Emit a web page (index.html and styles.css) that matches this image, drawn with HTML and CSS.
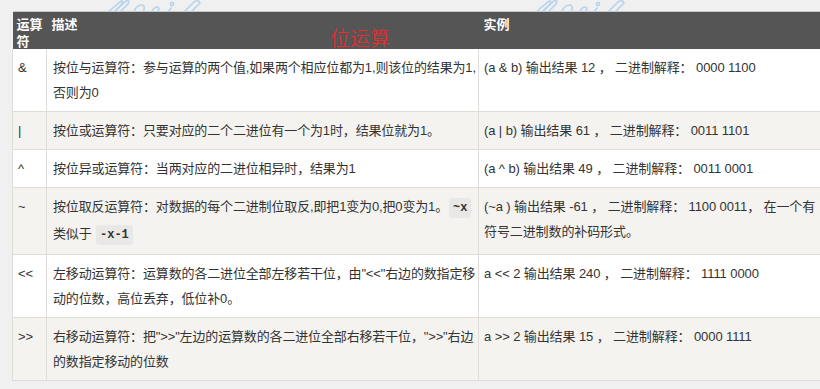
FILE: index.html
```html
<!DOCTYPE html>
<html lang="zh">
<head>
<meta charset="utf-8">
<title>位运算</title>
<link rel="stylesheet" href="styles.css">
</head>
<body>
<div class="page">
  <svg class="clip clip-a" width="110" height="12" viewBox="0 0 110 12">
    <g fill="none" stroke="#b9d3ec" stroke-width="1.6" stroke-linecap="round">
      <path d="M8 12 L20 2 Q24 -1 22 4 L14 12"/>
      <path d="M14 12 L26 1 Q30 -1 28 4 L20 12"/>
      <path d="M34 12 Q36 5 42 5 Q46 6 43 12"/>
      <path d="M52 11 Q54 7 58 7 Q60 9 57 12"/>
      <circle cx="72" cy="4" r="1.6"/>
      <path d="M68 12 L71 8"/>
      <path d="M84 12 L94 2 Q98 -1 100 3 L92 11"/>
    </g>
  </svg>
  <svg class="clip clip-b" width="110" height="12" viewBox="0 0 110 12">
    <g fill="none" stroke="#b9d3ec" stroke-width="1.6" stroke-linecap="round">
      <path d="M8 12 L20 2 Q24 -1 22 4 L14 12"/>
      <path d="M14 12 L26 1 Q30 -1 28 4 L20 12"/>
      <path d="M34 12 Q36 5 42 5 Q46 6 43 12"/>
      <path d="M52 11 Q54 7 58 7 Q60 9 57 12"/>
      <circle cx="70" cy="4" r="1.6"/>
      <path d="M66 12 L69 8"/>
      <path d="M80 12 L90 2 Q94 -1 96 3 L88 11"/>
    </g>
  </svg>
  <table class="ops">
    <colgroup>
      <col class="c1">
      <col class="c2">
      <col class="c3">
    </colgroup>
    <thead>
      <tr>
        <th>运算符</th>
        <th>描述</th>
        <th>实例</th>
      </tr>
    </thead>
    <tbody>
      <tr>
        <td>&amp;</td>
        <td>按位与运算符：参与运算的两个值,如果两个相应位都为1,则该位的结果为1,否则为0</td>
        <td>(a &amp; b) 输出结果 12 ， 二进制解释： 0000 1100</td>
      </tr>
      <tr class="alt">
        <td>|</td>
        <td>按位或运算符：只要对应的二个二进位有一个为1时，结果位就为1。</td>
        <td>(a | b) 输出结果 61 ， 二进制解释： 0011 1101</td>
      </tr>
      <tr>
        <td>^</td>
        <td>按位异或运算符：当两对应的二进位相异时，结果为1</td>
        <td>(a ^ b) 输出结果 49 ， 二进制解释： 0011 0001</td>
      </tr>
      <tr class="alt">
        <td>~</td>
        <td>按位取反运算符：对数据的每个二进制位取反,即把1变为0,把0变为1。<code>~x</code> 类似于 <code>-x-1</code></td>
        <td>(~a ) 输出结果 -61 ， 二进制解释： 1100 0011， 在一个有符号二进制数的补码形式。</td>
      </tr>
      <tr>
        <td>&lt;&lt;</td>
        <td>左移动运算符：运算数的各二进位全部左移若干位，由"&lt;&lt;"右边的数指定移动的位数，高位丢弃，低位补0。</td>
        <td>a &lt;&lt; 2 输出结果 240 ， 二进制解释： 1111 0000</td>
      </tr>
      <tr class="alt">
        <td>&gt;&gt;</td>
        <td>右移动运算符：把"&gt;&gt;"左边的运算数的各二进位全部右移若干位，"&gt;&gt;"右边的数指定移动的位数</td>
        <td>a &gt;&gt; 2 输出结果 15 ， 二进制解释： 0000 1111</td>
      </tr>
    </tbody>
  </table>
  <div class="title">位运算</div>
</div>
</body>
</html>
```

FILE: styles.css
```css
html, body {
  margin: 0;
  padding: 0;
  background: #f0f0f0;
}

body {
  font-family: "Liberation Sans", "Noto Sans CJK SC", sans-serif;
  color: #333;
  overflow: hidden;
}

.page {
  position: relative;
  padding: 11px 0 0 12px;
  width: 820px;
  height: 389px;
  box-sizing: border-box;
}

.clip {
  position: absolute;
  top: 0;
}

.clip-a { left: 100px; }
.clip-b { left: 528px; }

.ops {
  border-collapse: collapse;
  table-layout: fixed;
  width: 820px;
  font-size: 13px;
}

.c1 { width: 34px; }
.c2 { width: 432px; }
.c3 { width: 354px; }

.ops th {
  background: #555;
  color: #fff;
  font-weight: bold;
  text-align: left;
  vertical-align: top;
  line-height: 17px;
  height: 34px;
  padding: 3px 2px 0 5px;
  border-top: 1px solid #c8c8c8;
  font-family: "Noto Sans CJK SC", sans-serif;
  box-sizing: content-box;
}

.ops th:first-child {
  padding-left: 4px;
  padding-right: 0;
}

.ops td {
  background: #fff;
  vertical-align: top;
  line-height: 25px;
  padding: 6px 5px 6px 5px;
  border-bottom: 1px solid #e0ddd8;
  border-left: 1px solid #e0ddd8;
  word-break: break-all;
}

.ops td:nth-child(2) {
  padding-left: 6px;
  padding-right: 0;
  letter-spacing: -0.15px;
}

.ops td:nth-child(3) {
  padding-right: 10px;
  letter-spacing: -0.1px;
}

.ops tr.alt td {
  background: #f4f3f0;
}

.ops code {
  font-family: "Liberation Mono", monospace;
  font-weight: bold;
  font-size: 12px;
  letter-spacing: 0;
  white-space: nowrap;
  background: #e9e8e6;
  padding: 3px 4px;
  border-radius: 3px;
  margin: 0 1px;
}

.title {
  position: absolute;
  left: 330px;
  top: 25px;
  font-family: "Noto Sans CJK SC", sans-serif;
  font-weight: 300;
  font-size: 20px;
  line-height: 26px;
  color: #f02b2b;
}
```
